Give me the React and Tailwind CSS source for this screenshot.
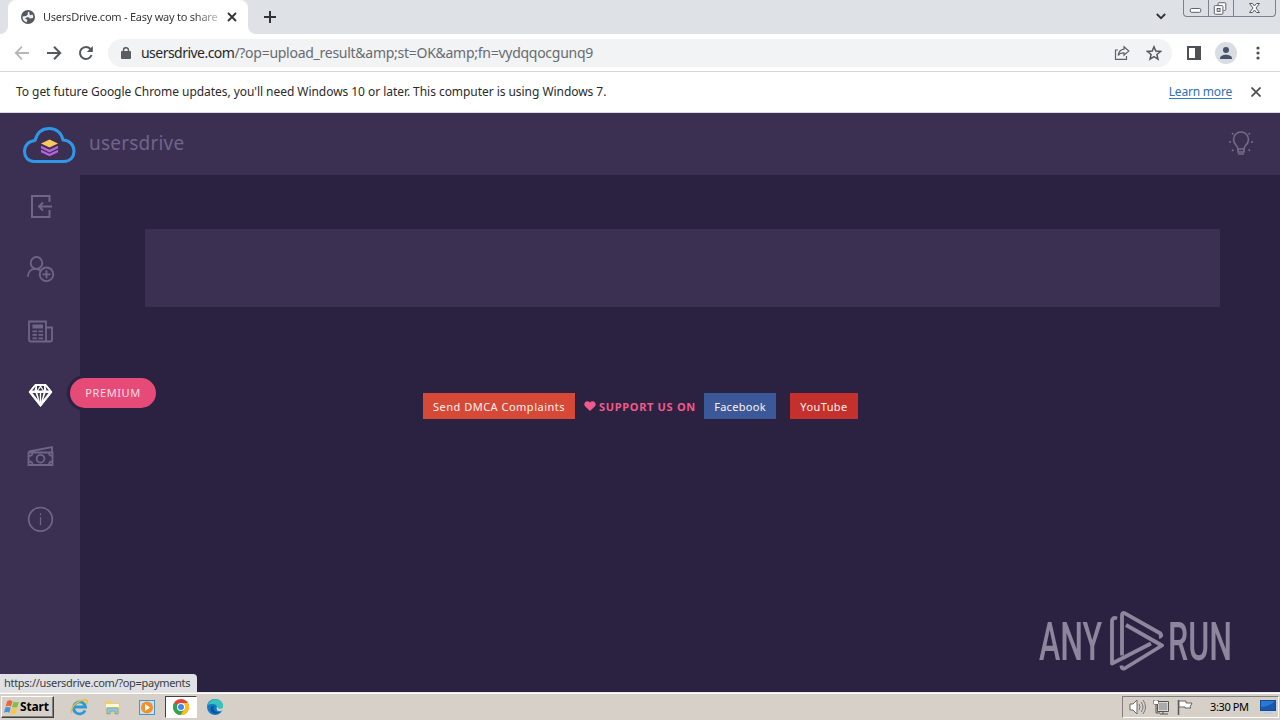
import React from "react";

const ui = "font-['Noto_Sans','Liberation_Sans',sans-serif]";

function TabStrip() {
  return (
    <div className="flex h-[34px] shrink-0 items-start bg-[#dee1e6]">
      <div className="flex h-full w-2 items-end bg-white">
        <div className="h-full w-2 rounded-br-lg bg-[#dee1e6]" />
      </div>
      <div className="flex h-full w-[240px] items-center rounded-t-lg bg-white pl-3">
        <svg className="size-4 shrink-0" viewBox="0 0 16 16">
          <circle cx="8" cy="8" r="7" fill="#55585d" />
          <path d="M9 2.500Q6.500 4 8 5.200L6 7 2.500 7.500Q2.500 12 6.500 13.300L7.500 11 5 9.200l3-1.200 2 1.500 3-.5q.8-2-.5-3.500l-2.500.7z" fill="#eceeef" />
        </svg>
        <span className="ml-[7px] w-[176px] shrink-0 overflow-hidden whitespace-nowrap bg-linear-to-r from-[#333] from-85% to-[#c8c8c8] bg-clip-text text-[11px] leading-[18px] tracking-[-0.24px] text-transparent">UsersDrive.com - Easy way to share</span>
        <svg className="ml-2 size-[10px] shrink-0" viewBox="0 0 10 10"><path d="M1 1l8 8M9 1L1 9" stroke="#333" strokeWidth="1.8" /></svg>
      </div>
      <div className="h-full w-2 bg-white"><div className="h-full w-2 rounded-bl-lg bg-[#dee1e6]" /></div>
      <svg className="mt-[11px] ml-2 size-3" viewBox="0 0 12 12"><path d="M6 0v12M0 6h12" stroke="#303238" strokeWidth="2" /></svg>
      <div className="flex-1" />
      <svg className="mt-[13px] mr-[17px] h-[7px] w-[10px]" viewBox="0 0 10 7"><path d="M.8 1L5 5.2 9.2 1" fill="none" stroke="#333" strokeWidth="1.8" /></svg>
      <div className="mr-1 flex h-[17px] w-[93px] rounded-b-[4px] border border-t-0 border-[#7c828b] bg-[#dce0e5]">
        <svg className="h-4 w-[25px] border-r border-[#7c828b]" viewBox="0 0 25 16"><rect x="6.5" y="8.5" width="11" height="4" rx="1.5" fill="#fff" stroke="#555b66" /></svg>
        <svg className="h-4 w-[25px] border-r border-[#7c828b]" viewBox="0 0 25 16"><path d="M9.500 5V3.500q0-1 1-1h6q1 0 1 1v6q0 1-1 1H15" fill="#fff" stroke="#555b66" /><rect x="5.500" y="5.500" width="9" height="9" rx="1" fill="#fff" stroke="#555b66" /><rect x="8.500" y="8.500" width="3" height="3" fill="#dce0e5" stroke="#555b66" /></svg>
        <svg className="h-4 w-[41px]" viewBox="0 0 41 16"><path d="M15.500 3.500h3l2 2.500 2-2.500h3l-3.500 4.500 3.500 4.500h-3l-2-2.500-2 2.500h-3L19 8z" fill="#fff" stroke="#555b66" /></svg>
      </div>
    </div>
  );
}

function Toolbar() {
  return (
    <div className="flex h-[38px] shrink-0 items-center border-b border-[#d5d7da] bg-white pl-[14px]">
      <svg className="size-4" viewBox="0 0 16 16"><path d="M15 8H2M8 1.700L1.800 8 8 14.300" fill="none" stroke="#b5b7ba" strokeWidth="1.800" /></svg>
      <svg className="ml-4 size-4" viewBox="0 0 16 16"><path d="M1 8h13M8 1.700L14.200 8 8 14.300" fill="none" stroke="#55585d" strokeWidth="2" /></svg>
      <svg className="ml-4 size-4" viewBox="0 0 16 16"><path d="M13.600 10A6 6 0 1 1 12.500 4L14 5.500" fill="none" stroke="#55585d" strokeWidth="2" /><path d="M14.800 1v6h-6z" fill="#55585d" /></svg>
      <div className="ml-[14px] flex h-7 w-[1064px] items-center rounded-full bg-[#f1f3f4] pr-[10px] pl-[13px]">
        <svg className="h-3 w-[10px]" viewBox="0 0 10 12"><rect y="4" width="10" height="8" rx="1" fill="#5a5d62" /><path d="M2.500 5V3.200a2.500 2.500 0 0 1 5 0V5" fill="none" stroke="#5a5d62" strokeWidth="1.500" /></svg>
        <span className="ml-[10px] whitespace-nowrap text-[14px] leading-5 tracking-[-0.27px] text-[#686c70]"><span className="tracking-[-0.53px] text-[#26282b]">usersdrive.com</span>/?op=upload_result&amp;amp;st=OK&amp;amp;fn=vydqqocgunq9</span>
        <div className="flex-1" />
        <svg className="size-4" viewBox="0 0 16 16"><path d="M4 5H1.500v9.300h11V11" fill="none" stroke="#5f6368" strokeWidth="1.200" /><path d="M10 1.800L14.800 6 10 10.200V7.800C7 7.700 5.300 8.600 4.200 10.500 4.600 7 6.500 4.600 10 4.200z" fill="none" stroke="#5f6368" strokeWidth="1.200" /></svg>
        <svg className="ml-4 size-4" viewBox="0 0 16 16"><path d="M8 1.800l1.800 4.300 4.700.4-3.600 3 1.100 4.600L8 11.700l-4 2.400 1.100-4.600-3.600-3 4.700-.4z" fill="none" stroke="#55585d" strokeWidth="1.500" /></svg>
      </div>
      <svg className="ml-[15px] h-[14px] w-[14px]" viewBox="0 0 14 14"><rect x="1" y="1" width="12" height="12" fill="none" stroke="#4d5056" strokeWidth="2" /><path d="M8 0h6v14H8z" fill="#4d5056" /></svg>
      <svg className="ml-[14px] size-[22px]" viewBox="0 0 22 22"><circle cx="11" cy="11" r="11" fill="#d9dde2" /><circle cx="11" cy="8" r="3" fill="#47536d" /><path d="M5 16.500c0-5 12-5 12 0v.500H5z" fill="#47536d" /></svg>
      <svg className="ml-[19px] h-[14px] w-1" viewBox="0 0 4 14"><g fill="#4d5056"><circle cx="2" cy="2" r="1.600" /><circle cx="2" cy="7" r="1.600" /><circle cx="2" cy="12" r="1.600" /></g></svg>
    </div>
  );
}

function Notice() {
  return (
    <div className="flex h-[41px] shrink-0 items-center border-b border-[#d9dae4] bg-white pr-[19px] pl-4 text-[12px] leading-[18px] text-[#2b2b2b]">
      <span className="tracking-[-0.05px]">To get future Google Chrome updates, you'll need Windows 10 or later. This computer is using Windows 7.</span>
      <div className="flex-1" />
      <span className="mr-[19px] border-b border-[#2f7fc4] leading-[13px] tracking-[-0.2px] text-[#2f6fb5]">Learn more</span>
      <svg className="size-[10px]" viewBox="0 0 10 10"><path d="M.5 .5l9 9M9.500 .5l-9 9" stroke="#4d5056" strokeWidth="1.800" /></svg>
    </div>
  );
}

function Header() {
  return (
    <div className="flex h-[62px] shrink-0 items-start bg-[#3b3052] pl-[22px]">
      <svg className="mt-[12px] h-[40px] w-[54px]" viewBox="0 0 54 40">
        <path d="M12 36.500C6 36.500 2.500 32 2.500 26.500c0-6 4-10.500 10.500-11C15 8 20 3.500 27.500 3.500c7.300 0 12.300 5 13.500 11.500C47.500 15.300 52 20 52 26c0 6-4 10.500-10 10.500z" fill="none" stroke="#2f96e8" strokeWidth="3" strokeLinejoin="round" />
        <path d="M27.500 14.500l8.500 4-8.500 4-8.500-4z" fill="#f9c85e" />
        <path d="M19 20.800l8.500 4 8.500-4v2.400l-8.500 4.300-8.500-4.300zM19 24.800l8.500 4 8.500-4v2.400l-8.500 4-8.500-4z" fill="#b765df" />
      </svg>
      <span className="mt-[15px] ml-[13px] text-[19px] leading-[30px] tracking-[0.2px] text-[#6f658b]">usersdrive</span>
      <div className="flex-1" />
      <svg className="mt-[18px] mr-[27px] h-[26px] w-[24px]" viewBox="0 0 24 26" fill="none" stroke="#736b86" strokeWidth="1.600">
        <path d="M9 18c0-3-4.500-4.800-4.500-9.500a7.500 7.500 0 0 1 15 0C19.500 13.200 15 15 15 18zM9 18v3h6v-3M9 23h6" />
        <path d="M0 11h2M22 11h2M3 2l1.500 1.500M21 2l-1.500 1.500M3 20l1.500-1.500M21 20l-1.500-1.500" />
      </svg>
    </div>
  );
}

const icons = [
  <svg key="login" className="size-[28px]" viewBox="0 0 28 28" fill="none" stroke="#6f6686" strokeWidth="2"><path d="M22.500 9V3H5v21h17.500V17M25 13.500H12M16 9.500l-4 4 4 4" /></svg>,
  <svg key="join" className="size-[28px]" viewBox="0 0 28 28" fill="none" stroke="#6f6686" strokeWidth="1.800"><ellipse cx="9.500" cy="8" rx="5.800" ry="6" /><path d="M1 21.800c0-5 3-8 7-8 2.500 0 4.500.8 6 2M19.500 15.300v8M15.500 19.300h8" /><circle cx="19.500" cy="19.300" r="6.800" /></svg>,
  <svg key="news" className="size-[28px]" viewBox="0 0 28 28" fill="none" stroke="#6f6686" strokeWidth="1.800"><path d="M2 3.500h17v20H4q-2 0-2-2zM19 9.500h6v12q0 2-2 2h-4" /><path d="M5.500 8.500h10.500" strokeWidth="4" /><path d="M5.500 13.300h4.500M11.500 13.300H16M5.500 16.800h4.500M11.500 16.800H16M5.500 20.300h4.500M11.500 20.300H16" /></svg>,
  <svg key="premium" className="size-[28px]" viewBox="0 0 28 28"><path d="M8 4.500h11l6 7.500-11.500 14.500L2 12z" fill="#fff" stroke="#fff" strokeLinejoin="round" /><path d="M8.500 6.500L7.500 10.500H5zM18.500 6.500l1 4H22zM10 6h3L10 10.500zM17 6h-3L17 10.500zM13.500 7.500l2.300 3h-4.600zM5.500 13h3l2.500 7zM21.500 13h-3l-2.500 7zM10.500 13h2.300v9zM16.500 13h-2.300v9z" fill="#3b3052" /></svg>,
  <svg key="money" className="size-[28px]" viewBox="0 0 28 28" fill="none" stroke="#6f6686" strokeWidth="1.800"><path d="M1.500 9.500h24v12.500h-24zM2 8.500l23-4.500v4.500" /><circle cx="13.500" cy="15.700" r="3.900" /><path d="M2 13q3.500 0 3.500-3.500M22 9.500q0 3.500 3.500 3.500M2 18.500q3.500 0 3.500 3.500M22 22q0-3.500 3.500-3.500" /></svg>,
  <svg key="info" className="size-[28px]" viewBox="0 0 28 28" fill="none" stroke="#6f6686" strokeWidth="1.700"><circle cx="13.500" cy="14.300" r="11.800" /><path d="M13.500 12.300v8M13.500 8.300v2" strokeWidth="1.300" /></svg>,
];

function Sidebar() {
  return (
    <div className="relative z-10 w-20 shrink-0 bg-[#3b3052]">
      {icons.map((icon, i) => (
        <div key={i} className="flex h-[62.5px] items-center justify-center pt-px pl-px">{icon}</div>
      ))}
      <div className="absolute top-[203px] left-[70px] flex h-[30px] w-[86px] items-center justify-center rounded-full bg-[#e54b76] text-[11px] tracking-[0.6px] text-[#fbdce6] ring-3 ring-[#2b2140]">PREMIUM</div>
    </div>
  );
}

function Watermark() {
  const word = "block origin-left scale-x-[.605] whitespace-nowrap font-['Roboto',sans-serif] text-[53px] leading-[54px] font-medium text-[#8d869c]";
  return (
    <div className="absolute top-[435px] left-[959px] flex h-[61px] w-[194px]">
      <div className="mt-[5px] w-[70px]"><span className={word}>ANY</span></div>
      <svg className="h-[61px] w-[55px] shrink-0" viewBox="0 0 55 61" fill="none" stroke="#8d869c" strokeWidth="3.800" strokeLinejoin="round">
        <path d="M8 8.500Q3 6.500 3 12v41.500L42 33.500" />
        <path d="M13 45.500V5q0-3 3-1.700L51.500 23.500q2 3-1.500 3.500" />
        <path d="M17 15L53 35.500 15.500 58.500q-3 1-3-3" />
      </svg>
      <div className="mt-[5px] ml-[4px] w-[62px]"><span className={word}>RUN</span></div>
    </div>
  );
}

function Content() {
  return (
    <div className="relative flex flex-1 flex-col bg-[#2b2140]">
      <div className="mt-[54px] ml-[65px] h-[78px] w-[1075px] bg-[#3b3052]" />
      <div className="mt-[86px] ml-[343px] flex h-[26px] items-center text-[11px] leading-[26px] whitespace-nowrap text-[#fff0ef]">
        <div className="h-[26px] w-[152px] bg-[#d54936] pt-px text-center tracking-[0.5px]">Send DMCA Complaints</div>
        <svg className="ml-[9px] h-[10px] w-3" viewBox="0 0 12 10"><path d="M6 10L1 5.300C-1.500 2 3-2 6 1.500 9-2 13.500 2 11 5.300z" fill="#f0598b" /></svg>
        <span className="ml-[3px] w-[105px] pt-px font-bold tracking-[0.68px] text-[#f0598b]">SUPPORT US ON</span>
        <div className="h-[26px] w-[72px] bg-[#3b5998] pt-px text-center tracking-[0.3px]">Facebook</div>
        <div className="ml-[14px] h-[26px] w-[68px] bg-[#c4302b] pt-px text-center tracking-[0.4px]">YouTube</div>
      </div>
      <Watermark />
    </div>
  );
}

function Taskbar() {
  return (
    <div className="flex h-7 shrink-0 items-center border-t border-[#ece9e4] bg-[#d6d0c8] pt-px pl-px shadow-[inset_0_1px_0_#fff]">
      <div className="flex h-[22px] w-[53px] items-center border border-t-white border-r-[#404040] border-b-[#404040] border-l-white pl-[2px] shadow-[inset_-1px_-1px_0_#808080]">
        <svg className="size-[16px] shrink-0" viewBox="0 0 15 15"><path d="M3 2q2-1.500 5 0L6.500 7Q4 5.800 1.500 7z" fill="#ed6535" /><path d="M9 2.500q2.500 1 5 0L12.500 7.500q-2.500 1-5 0z" fill="#82bd45" /><path d="M1.300 8q2.500-1 5 .2L5 13Q2.500 11.500 0 13z" fill="#4593dd" /><path d="M7.300 8.700q2.500 1 5 0L11 13.500q-2.500 1-5 0z" fill="#f6ca38" /></svg>
        <span className="text-[12px] font-bold tracking-[-0.15px] text-black">Start</span>
      </div>
      <svg className="ml-[16px] size-[18px]" viewBox="0 0 18 18"><path d="M15 12.500A6 6 0 1 1 15.500 9H5" fill="none" stroke="#299bdb" strokeWidth="2.800" /><path d="M2 15C-1 10 9 1 16 2c2 .5 1 3 0 4" fill="none" stroke="#edbc38" strokeWidth="1.500" /></svg>
      <svg className="ml-4 size-[17px]" viewBox="0 0 17 17"><path d="M1 2h6l1 2h8v11H1z" fill="#efce70" /><path d="M2 5h13v3H2z" fill="#fff8d5" /><path d="M3 15v-5q0-1 1-1h9q1 0 1 1v5h-3v-3H6v3z" fill="#8fc7e8" stroke="#5c9fc9" strokeWidth=".7" /></svg>
      <svg className="ml-[18px] size-[17px]" viewBox="0 0 17 17"><rect x=".5" y="1.500" width="15" height="14" fill="#c8e2f1" stroke="#4c94c5" /><circle cx="8" cy="8.500" r="6" fill="#f2902b" /><path d="M6 5l5 3.500L6 12z" fill="#fff" /></svg>
      <div className="ml-[9px] flex h-[22px] w-[32px] items-center justify-center border border-t-[#404040] border-r-white border-b-white border-l-[#404040] bg-white">
        <svg className="size-4" viewBox="0 0 16 16"><circle cx="8" cy="8" r="8" fill="#e64235" /><path d="M8 8L1.100 4a8 8 0 0 0 6.400 12l4-6z" fill="#31a650" /><path d="M8 8V4h6.900A8 8 0 0 1 7.500 16l4-6z" fill="#fbc116" /><circle cx="8" cy="8" r="4" fill="#fff" /><circle cx="8" cy="8" r="3" fill="#4286ef" /></svg>
      </div>
      <svg className="ml-[9px] size-[18px]" viewBox="0 0 18 18"><circle cx="9" cy="9" r="8" fill="#1479c5" /><path d="M2 7C4 0 15-1 17 7c1 5-5 6-7 4 2-3 0-5-3-5-2 0-4 0-5 1z" fill="#36c3bc" /><path d="M8 8c-2 4 2 7 6 6-5 4-11 0-9-5 1-1 2-1 3-1z" fill="#095398" /><path d="M11 8.500c1 3 4 3 6 1v2q-2 3-6 1z" fill="#d6d0c8" /></svg>
      <div className="flex-1" />
      <div className="mr-px flex h-[22px] w-[157px] items-center border border-t-[#808080] border-r-white border-b-white border-l-[#808080] pl-[6px]">
        <svg className="h-4 w-[17px]" viewBox="0 0 17 16"><path d="M1 5h3l4-4v14l-4-4H1z" fill="#fff" stroke="#666" /><path d="M10 5q2 3 0 6M12 3q4 5 0 10M14 1q5 7 0 14" fill="none" stroke="#777" /></svg>
        <svg className="ml-[7px] size-4" viewBox="0 0 16 16"><rect x="5" y="3" width="10" height="9" fill="#aaa" stroke="#fff" /><path d="M4.500 2.500h11v10h-11zM7 15h8M10 12v3M1 1v4h4V1M3 5v9h4" fill="none" stroke="#555" /><path d="M1 2h4v3H1z" fill="#fff" /></svg>
        <svg className="ml-2 size-4" viewBox="0 0 16 16"><path d="M1.500 1v15" stroke="#555" strokeWidth="1.500" /><path d="M2 2h7v2h6l-2 4 1 1H8V8H2z" fill="#fff" stroke="#666" /></svg>
        <span className="ml-[17px] text-[11px] whitespace-nowrap tracking-[-0.38px] text-black">3:30 PM</span>
        <div className="flex-1" />
        <svg className="mr-[2px] h-[14px] w-4" viewBox="0 0 16 14"><rect x=".5" y=".5" width="15" height="10" fill="#2b79d1" stroke="#164b95" /><path d="M1 7q8 0 14-6v9H1z" fill="#1959ad" /><path d="M4 12h8v2H4z" fill="#b8cee5" /></svg>
      </div>
    </div>
  );
}

export default function App() {
  return (
    <div className={`relative flex h-[720px] w-[1280px] flex-col overflow-hidden ${ui}`}>
      <TabStrip />
      <Toolbar />
      <Notice />
      <Header />
      <div className="flex flex-1">
        <Sidebar />
        <Content />
      </div>
      <Taskbar />
      <div className="absolute top-[674px] left-0 z-20 flex h-[18px] w-[197px] items-center rounded-tr-[4px] bg-[#dfe1e5] pl-1 text-[11px] whitespace-nowrap tracking-[-0.3px] text-[#3c4043]">https://usersdrive.com/?op=payments</div>
    </div>
  );
}
